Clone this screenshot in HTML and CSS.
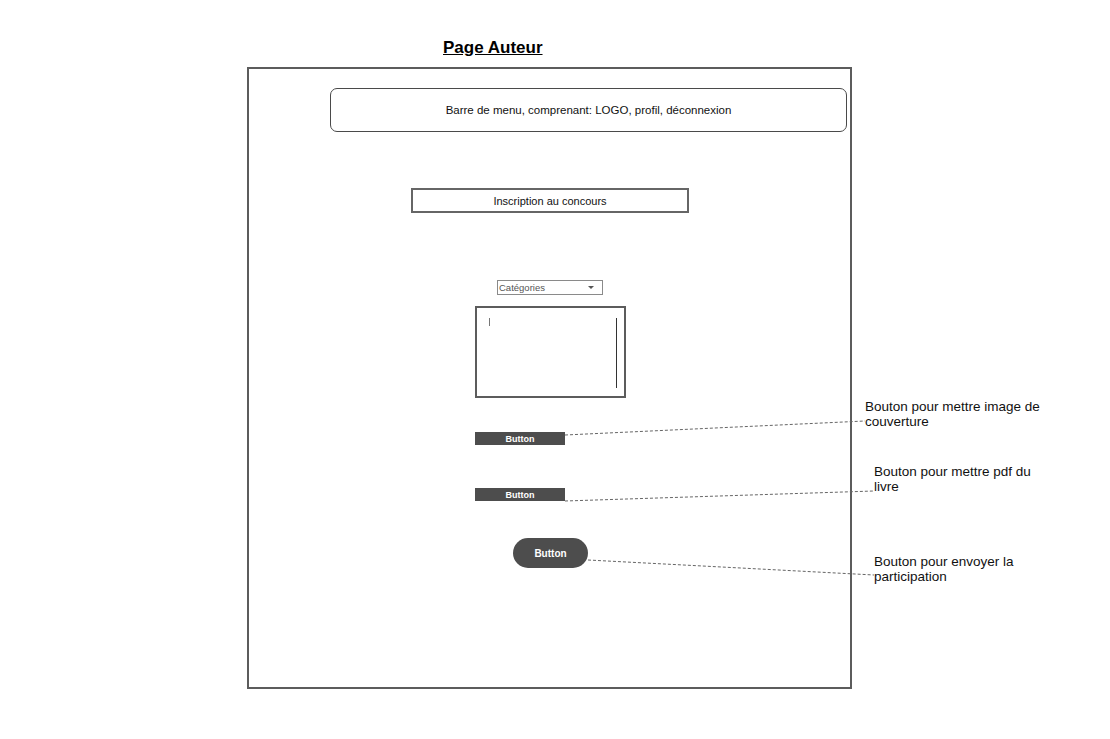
FILE: index.html
```html
<!DOCTYPE html>
<html lang="fr">
<head>
<meta charset="utf-8">
<title>Page Auteur</title>
<link rel="stylesheet" href="styles.css">
</head>
<body>
<div class="canvas">
  <div class="sheet">
    <h1 class="title">Page Auteur</h1>
    <div class="frame">
      <div class="menubar">Barre de menu, comprenant: LOGO, profil, déconnexion</div>
      <div class="inscription">Inscription au concours</div>
      <div class="select"><span class="select-label">Catégories</span><span class="select-arrow"></span></div>
      <div class="textarea"><span class="caret"></span><span class="scroll"></span></div>
      <div class="btn btn-one">Button</div>
      <div class="btn btn-two">Button</div>
      <div class="btn-round">Button</div>
    </div>
  </div>
  <svg class="links" width="1110" height="739" viewBox="0 0 1110 739">
    <line x1="565" y1="435" x2="865" y2="421"/>
    <line x1="565" y1="501" x2="874" y2="491"/>
    <line x1="588" y1="560" x2="874" y2="575"/>
  </svg>
  <div class="note note-one">Bouton pour mettre image de<br>couverture</div>
  <div class="note note-two">Bouton pour mettre pdf du<br>livre</div>
  <div class="note note-three">Bouton pour envoyer la<br>participation</div>
</div>
</body>
</html>
```
FILE: styles.css
```css
* { box-sizing: border-box; }
html, body { margin: 0; padding: 0; background: #fff; }
body { font-family: "Liberation Sans", Arial, sans-serif; color: #1a1a1a; }

.canvas { position: relative; width: 1110px; height: 739px; overflow: hidden; }

.sheet { padding: 38px 0 0 247px; }

.title {
  margin: 0 0 10px 196px;
  font-size: 17px;
  line-height: 19px;
  font-weight: bold;
  text-decoration: underline;
  color: #000;
}

.frame {
  width: 605px;
  height: 622px;
  border: 2px solid #5c5c5c;
  display: flex;
  flex-direction: column;
  align-items: flex-start;
}

.menubar {
  margin: 19px 0 0 81px;
  width: 517px;
  height: 44px;
  border: 1.5px solid #4a4a4a;
  border-radius: 7px;
  display: flex;
  align-items: center;
  justify-content: center;
  font-size: 11.5px;
  color: #111;
}

.inscription {
  margin: 56px 0 0 162px;
  width: 278px;
  height: 25px;
  border: 2px solid #666;
  display: flex;
  align-items: center;
  justify-content: center;
  font-size: 11px;
  color: #111;
}

.select {
  margin: 67px 0 0 248px;
  width: 106px;
  height: 15px;
  border: 1px solid #8a8a8a;
  display: flex;
  align-items: center;
  justify-content: space-between;
  padding: 0 8px 0 1px;
}
.select-label { font-size: 9.5px; color: #555; line-height: 12px; }
.select-arrow {
  width: 0; height: 0;
  border-left: 3px solid transparent;
  border-right: 3px solid transparent;
  border-top: 3px solid #555;
}

.textarea {
  margin: 11px 0 0 226px;
  width: 151px;
  height: 92px;
  border: 2px solid #5c5c5c;
  display: flex;
  justify-content: space-between;
  align-items: flex-start;
  padding: 10px 7px 8px 12px;
}
.caret { width: 1px; height: 8px; background: #777; }
.scroll { width: 1px; height: 70px; background: #333; }

.btn {
  margin-left: 226px;
  width: 90px;
  height: 13px;
  background: #4d4d4d;
  color: #fff;
  font-size: 9px;
  font-weight: bold;
  display: flex;
  align-items: center;
  justify-content: center;
}
.btn-one { margin-top: 34px; }
.btn-two { margin-top: 43px; }

.btn-round {
  margin: 37px 0 0 264px;
  width: 75px;
  height: 30px;
  border-radius: 15px;
  background: #4d4d4d;
  color: #fff;
  font-size: 10px;
  font-weight: bold;
  display: flex;
  align-items: center;
  justify-content: center;
}

.links { position: absolute; left: 0; top: 0; pointer-events: none; }
.links line { stroke: #666; stroke-width: 1; stroke-dasharray: 3 2; }

.note {
  position: absolute;
  font-size: 13.5px;
  line-height: 15px;
  color: #111;
  white-space: nowrap;
}
.note-one { left: 865px; top: 399px; }
.note-two { left: 874px; top: 464px; }
.note-three { left: 874px; top: 554px; }
```
